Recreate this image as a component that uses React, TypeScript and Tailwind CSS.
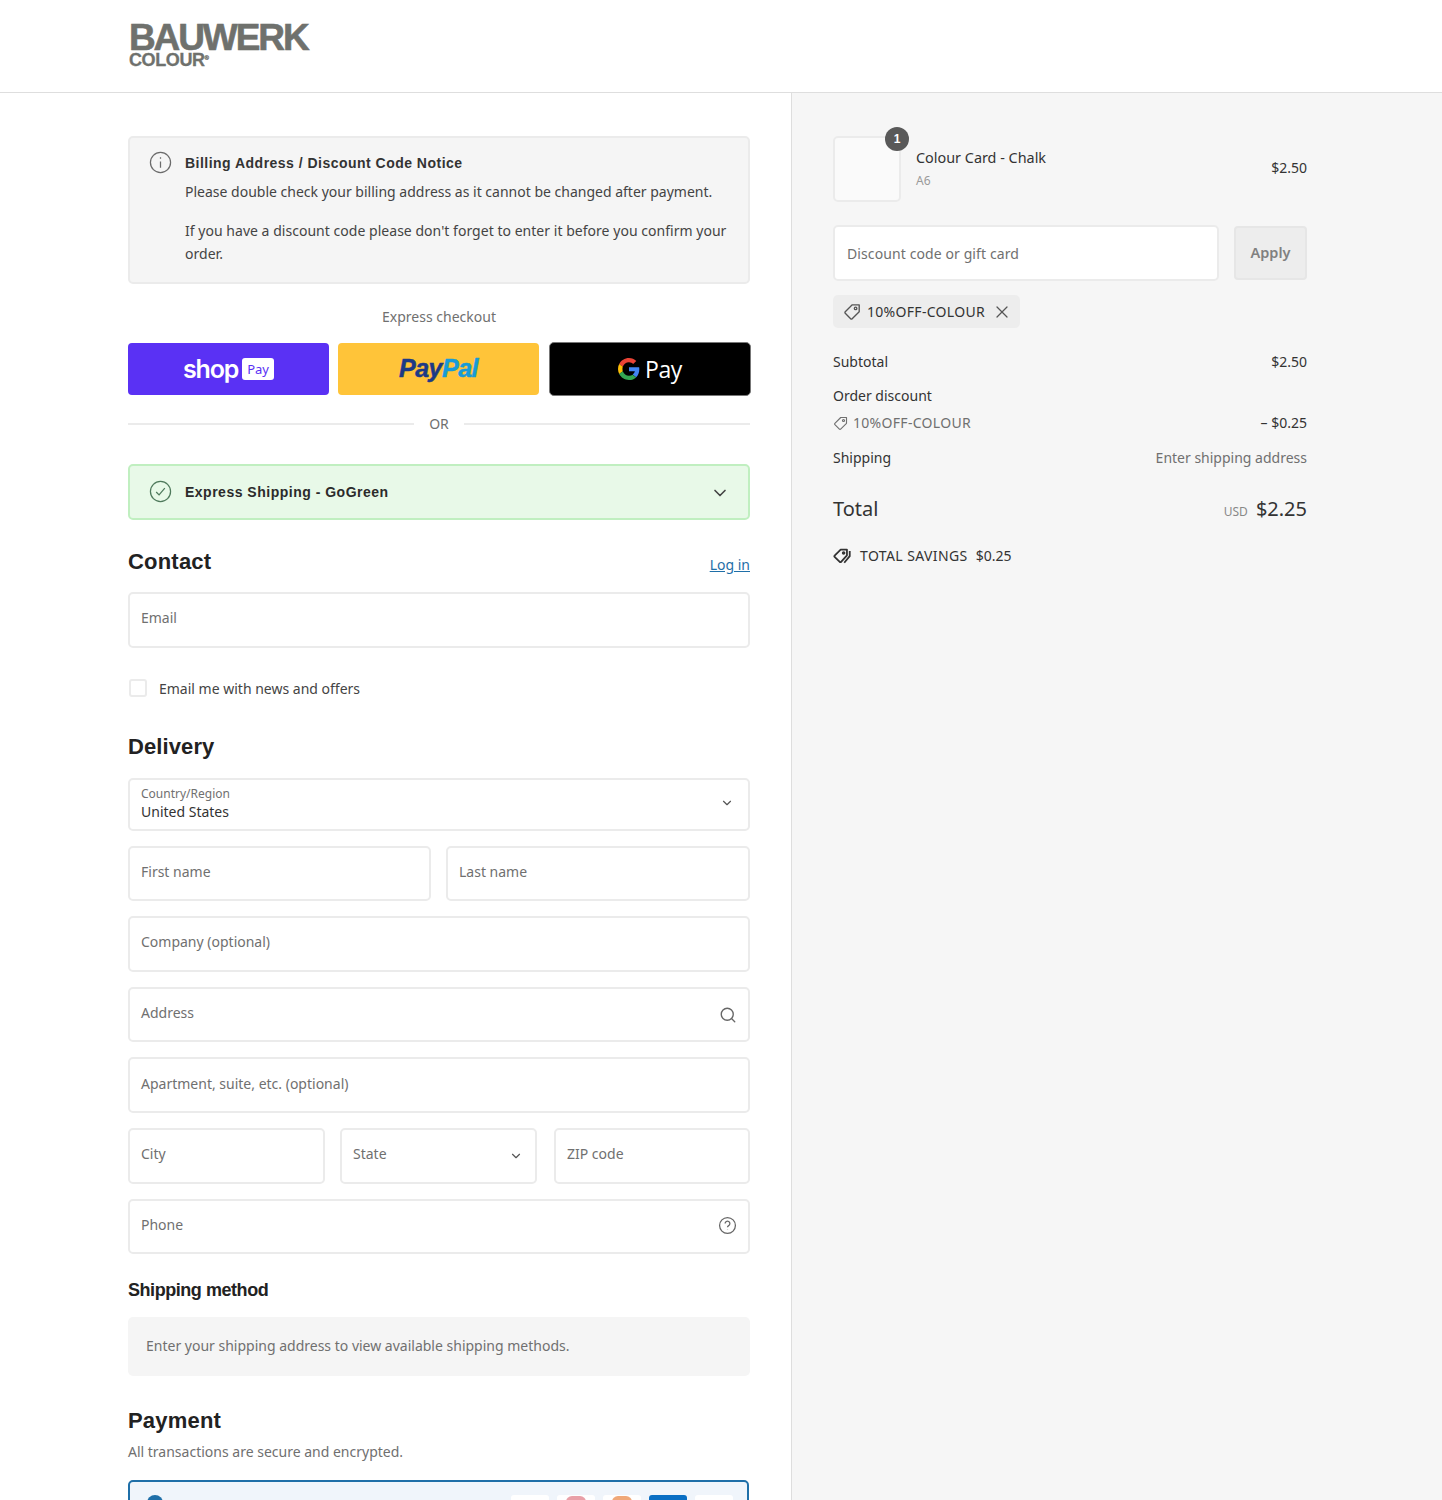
import { ChevronDown, Search, X } from "lucide-react";
import type { ReactNode } from "react";

const body = "font-['Noto_Sans',sans-serif]";
const bold = "font-['Liberation_Sans',Arial,sans-serif] font-bold";

function Field({
  label,
  className = "",
  children,
}: {
  label: string;
  className?: string;
  children?: ReactNode;
}) {
  return (
    <div
      className={`flex h-[55.6px] items-center justify-between rounded-[5px] border-2 border-[#ebebeb] bg-white pb-[4px] pl-[11px] pr-[11px] ${className}`}
    >
      <span className="text-[14px] text-[#707070]">{label}</span>
      {children}
    </div>
  );
}

function Tag({ className = "" }: { className?: string }) {
  return (
    <svg viewBox="0 0 20 20" fill="none" stroke="currentColor" strokeWidth="1.5" className={className}>
      <path d="M18 2.5v7.2L10.2 17.5a1.2 1.2 0 0 1-1.7 0L2.5 11.5a1.2 1.2 0 0 1 0-1.7L10.3 2H18z" strokeLinejoin="round" />
      <circle cx="14" cy="6" r="1.4" />
    </svg>
  );
}

function SavingsTag() {
  return (
    <svg viewBox="0 0 20 20" fill="none" stroke="#333" strokeWidth="2" className="h-[18px] w-[18px]">
      <path d="M15.5 3v6.2L9 16.5a1 1 0 0 1-1.5 0L1.8 11a1 1 0 0 1 0-1.5L8.5 3h7z" strokeLinejoin="round" />
      <circle cx="11.8" cy="6.6" r="1" />
      <path d="M18.6 4.5v5.6L12.5 17.5" />
    </svg>
  );
}

function GoogleG() {
  return (
    <svg viewBox="0 0 48 48" className="h-[22px] w-[22px]">
      <path fill="#EA4335" d="M24 9.5c3.9 0 6.9 1.6 9.1 3.6l6.8-6.8C35.7 2.5 30.3 0 24 0 14.6 0 6.5 5.4 2.6 13.2l7.9 6.1C12.4 13.6 17.7 9.5 24 9.5z" />
      <path fill="#4285F4" d="M46.5 24.5c0-1.6-.1-3.1-.4-4.5H24v9h12.7c-.6 2.9-2.2 5.4-4.7 7l7.6 5.9c4.4-4.1 6.9-10.1 6.9-17.4z" />
      <path fill="#FBBC05" d="M10.5 28.7c-.5-1.4-.8-3-.8-4.7s.3-3.2.8-4.7l-7.9-6.1C.9 16.5 0 20.1 0 24s.9 7.5 2.6 10.8l7.9-6.1z" />
      <path fill="#34A853" d="M24 48c6.3 0 11.7-2.1 15.6-5.6L32 36.5c-2.1 1.4-4.8 2.3-8 2.3-6.3 0-11.6-4.1-13.5-9.8l-7.9 6.1C6.5 42.6 14.6 48 24 48z" />
    </svg>
  );
}

function Row({ left, right, className = "" }: { left: ReactNode; right: ReactNode; className?: string }) {
  return (
    <div className={`flex items-center justify-between ${className}`}>
      {left}
      {right}
    </div>
  );
}

export default function App() {
  return (
    <div className={`h-[1500px] overflow-hidden bg-white text-[#333] ${body}`}>
      <header className="flex h-[93px] border-b border-[#dedede] pl-[129px] pt-[23px]">
        <div className={`${bold} text-[#6f716d]`}>
          <div className="text-[37px] leading-[30px] tracking-[-2.1px] [-webkit-text-stroke:0.6px_#6f716d]">BAUWERK</div>
          <div className="text-[18px] leading-[15px] tracking-[-0.4px] [-webkit-text-stroke:0.3px_#6f716d]">
            COLOUR<span className="align-top text-[6px] leading-[10px]">®</span>
          </div>
        </div>
      </header>

      <div className="flex h-[1407px]">
        <main className="w-[792px] border-r border-[#dedede] pl-[128px] pr-[41px] pt-[43px]">
          <section className="flex h-[148px] gap-[13px] rounded-[5px] border-2 border-[#ebebeb] bg-[#f5f5f5] pl-[19px] pr-[18px] pt-[13px]">
            <svg viewBox="0 0 24 24" fill="none" stroke="#6b6b6b" strokeWidth="1.3" className="h-[23px] w-[23px] shrink-0">
              <circle cx="12" cy="12" r="10.5" />
              <path d="M12 11v6.5M12 6.5v1.5" />
            </svg>
            <div className="mt-[1px]">
              <h2 className={`${bold} text-[14px] leading-[22px] tracking-[0.48px] text-[#333]`}>
                Billing Address / Discount Code Notice
              </h2>
              <p className="mt-[7px] text-[14px] leading-[22px] text-[#444]">
                Please double check your billing address as it cannot be changed after payment.
              </p>
              <p className="mt-[16px] text-[14px] leading-[23px] tracking-[0.03px] text-[#444]">
                If you have a discount code please don't forget to enter it before you confirm your order.
              </p>
            </div>
          </section>

          <div className="mt-[23px] text-center text-[14px] leading-[20px] text-[#707070]">Express checkout</div>

          <div className="mt-[15px] flex items-center">
            <div className="flex h-[52px] w-[201px] shrink-0 items-center justify-center gap-[4px] rounded-[4px] bg-[#5a31f4] text-white">
              <span className="font-['Inter',sans-serif] text-[25px] font-semibold leading-none tracking-[-1.2px]">shop</span>
              <span className="rounded-[3px] bg-white px-[5px] py-[3px] text-[13px] leading-[16px] text-[#5a31f4]">Pay</span>
            </div>
            <div className={`ml-[9px] flex h-[52px] w-[201px] shrink-0 items-center justify-center rounded-[4px] bg-[#ffc439] ${bold} text-[25px] italic tracking-[-0.5px]`}>
              <span className="text-[#1d3a86] [-webkit-text-stroke:0.5px_#1d3a86]">Pay</span>
              <span className="text-[#179bd7] [-webkit-text-stroke:0.5px_#179bd7]">Pal</span>
            </div>
            <div className="ml-[10px] flex h-[54px] w-[202px] shrink-0 items-center justify-center gap-[5px] rounded-[5px] border border-[#777] bg-black text-white">
              <GoogleG />
              <span className="font-['Open_Sans',sans-serif] text-[23px] leading-none tracking-[-0.4px]">Pay</span>
            </div>
          </div>

          <div className="mt-[18px] flex items-center gap-[15px]">
            <div className="h-[2px] flex-1 bg-[#ebebeb]" />
            <span className="text-[14px] leading-[20px] text-[#707070]">OR</span>
            <div className="h-[2px] flex-1 bg-[#ebebeb]" />
          </div>

          <section className="mt-[30px] flex h-[56px] items-center gap-[13px] rounded-[5px] border-2 border-[#c0efc0] bg-[#e8f9e8] pl-[19px] pr-[18px]">
            <svg viewBox="0 0 24 24" fill="none" stroke="#4f7a5c" strokeWidth="1.3" className="-mt-[2px] h-[23px] w-[23px] shrink-0">
              <circle cx="12" cy="12" r="10.5" />
              <path d="M7.5 12.5l3 3 6-7" />
            </svg>
            <span className={`${bold} flex-1 text-[14px] tracking-[0.5px] text-[#2b2b2b]`}>Express Shipping - GoGreen</span>
            <ChevronDown className="mt-[1px] h-[20px] w-[20px] text-[#444]" strokeWidth={2} />
          </section>

          <div className="mt-[28px] flex items-end justify-between">
            <h2 className={`${bold} text-[22px] leading-[28px] tracking-[0.2px] text-[#222]`}>Contact</h2>
            <a className="text-[14px] leading-[23px] text-[#1f6fa8] underline">Log in</a>
          </div>

          <Field label="Email" className="mt-[16px]" />

          <div className="ml-[1px] mt-[30px] flex h-[21px] items-center gap-[12px]">
            <div className="h-[18px] w-[18px] rounded-[3px] border-2 border-[#ebebeb] bg-white" />
            <span className="text-[14px] text-[#444]">Email me with news and offers</span>
          </div>

          <h2 className={`${bold} mt-[34px] text-[22px] leading-[28px] tracking-[0.1px] text-[#222]`}>Delivery</h2>

          <div className="mt-[17px] flex h-[53px] items-center justify-between rounded-[5px] border-2 border-[#ebebeb] pb-[2px] pl-[11px] pr-[14px]">
            <div>
              <div className="text-[12px] leading-[16px] text-[#707070]">Country/Region</div>
              <div className="text-[14px] leading-[19px] text-[#333]">United States</div>
            </div>
            <ChevronDown className="h-[14px] w-[14px] text-[#555]" strokeWidth={2} />
          </div>

          <div className="mt-[15px] grid gap-[15px]">
            <div className="flex gap-[15px]">
              <Field label="First name" className="w-[303px]" />
              <Field label="Last name" className="flex-1" />
            </div>
            <Field label="Company (optional)" />
            <Field label="Address">
              <Search className="mt-[4px] h-[18px] w-[18px] text-[#666]" strokeWidth={1.8} />
            </Field>
            <Field label="Apartment, suite, etc. (optional)" />
            <div className="flex gap-[15px]">
              <Field label="City" className="w-[197px]" />
              <Field label="State" className="w-[197px] pr-[12px]">
                <ChevronDown className="mt-[4px] h-[14px] w-[14px] text-[#555]" strokeWidth={2} />
              </Field>
              <Field label="ZIP code" className="ml-[2px] flex-1" />
            </div>
            <Field label="Phone">
              <svg viewBox="0 0 24 24" fill="none" stroke="#666" strokeWidth="1.6" className="mt-[3px] h-[19px] w-[19px]">
                <circle cx="12" cy="12" r="10" />
                <path d="M9 9.5a3 3 0 1 1 4.5 2.6c-1 .6-1.5 1-1.5 2M12 17v.5" />
              </svg>
            </Field>
          </div>

          <h3 className={`${bold} mt-[24px] text-[18px] leading-[24px] tracking-[-0.45px] text-[#222]`}>Shipping method</h3>

          <div className="mt-[15px] flex h-[59px] items-center rounded-[5px] bg-[#f5f5f5] pb-[3px] pl-[18px] text-[14px] text-[#707070]">
            Enter your shipping address to view available shipping methods.
          </div>

          <h2 className={`${bold} mt-[31px] text-[22px] leading-[28px] tracking-[0.2px] text-[#222]`}>Payment</h2>
          <p className="mt-[7px] text-[14px] leading-[20px] text-[#707070]">All transactions are secure and encrypted.</p>

          <div className="mr-[1px] mt-[18px] flex h-[60px] justify-between rounded-[5px] border-2 border-[#1f6fa8] bg-[#f0f5fb] pl-[17px] pr-[14px] pt-[13px]">
            <div className="h-[16px] w-[16px] rounded-full bg-[#1f6fa8]" />
            <div className="flex gap-[8px]">
              <div className="h-[24px] w-[38px] rounded-[3px] bg-white" />
              <div className="h-[24px] w-[38px] rounded-[3px] bg-white pt-[1px]">
                <div className="mx-auto h-[6px] w-[20px] rounded-t-full bg-[#e9a0a8]" />
              </div>
              <div className="h-[24px] w-[38px] rounded-[3px] bg-white pt-[1px]">
                <div className="mx-auto h-[6px] w-[20px] rounded-t-full bg-[#f0a878]" />
              </div>
              <div className="h-[24px] w-[38px] rounded-[3px] bg-[#0a6fc4]" />
              <div className="h-[24px] w-[38px] rounded-[3px] bg-white" />
            </div>
          </div>
        </main>

        <aside className="flex-1 bg-[#f6f6f6] pl-[41px] pr-[135px] pt-[43px] text-[14px]">
          <div className="flex items-center">
            <div className="relative h-[66px] w-[68px] rounded-[5px] border-2 border-[#ebebeb] bg-[#fafafa]">
              <span className={`${bold} absolute -right-[10px] -top-[11px] flex h-[24px] w-[24px] items-center justify-center rounded-full bg-[#595959] text-[12px] text-white`}>
                1
              </span>
            </div>
            <div className="ml-[15px] flex-1 pb-[1px]">
              <div className="text-[14.4px] leading-[20px] text-[#333]">Colour Card - Chalk</div>
              <div className="mt-[4px] text-[12px] leading-[18px] text-[#9a9a9a]">A6</div>
            </div>
            <span className="pb-[3px] text-[#333]">$2.50</span>
          </div>

          <div className="mt-[23px] flex gap-[15px]">
            <div className="flex h-[56px] flex-1 items-center rounded-[5px] border-2 border-[#ebebeb] bg-white pl-[12px] tracking-[0.1px] text-[#707070]">
              Discount code or gift card
            </div>
            <div className="mt-[1px] flex h-[54px] w-[73px] items-center justify-center rounded-[4px] border-2 border-[#e6e6e6] bg-[#ededed] text-[14.5px] font-semibold text-[#808080]">
              Apply
            </div>
          </div>

          <div className="mt-[14px] flex h-[33px] w-fit items-center rounded-[5px] bg-[#ededed] pl-[10px] pr-[8px] tracking-[0.3px] text-[#333]">
            <Tag className="h-[18px] w-[18px] text-[#555]" />
            <span className="ml-[6px]">10%OFF-COLOUR</span>
            <X className="ml-[7px] h-[20px] w-[20px] text-[#555]" strokeWidth={1.5} />
          </div>

          <Row className="mt-[22px] leading-[24px]" left={<span>Subtotal</span>} right={<span>$2.50</span>} />
          <div className="mt-[10px] leading-[24px]">Order discount</div>
          <Row
            className="mt-[3px] leading-[24px]"
            left={
              <span className="flex items-center gap-[5px] tracking-[0.3px] text-[#707070]">
                <Tag className="h-[15px] w-[15px]" />
                10%OFF-COLOUR
              </span>
            }
            right={<span>– $0.25</span>}
          />
          <Row
            className="mt-[11px] leading-[24px]"
            left={<span>Shipping</span>}
            right={<span className="text-[#707070]">Enter shipping address</span>}
          />
          <Row
            className="mt-[23px]"
            left={<span className="text-[20px] leading-[32px] text-[#333]">Total</span>}
            right={
              <span className="flex items-baseline gap-[8px]">
                <span className="text-[12px] text-[#888]">USD</span>
                <span className="text-[20px] leading-[32px] text-[#333]">$2.25</span>
              </span>
            }
          />
          <div className="mt-[19px] flex items-center leading-[24px] text-[#333]">
            <SavingsTag />
            <span className="ml-[9px] tracking-[0.4px]">TOTAL SAVINGS</span>
            <span className="ml-[8px]">$0.25</span>
          </div>
        </aside>
      </div>
    </div>
  );
}
